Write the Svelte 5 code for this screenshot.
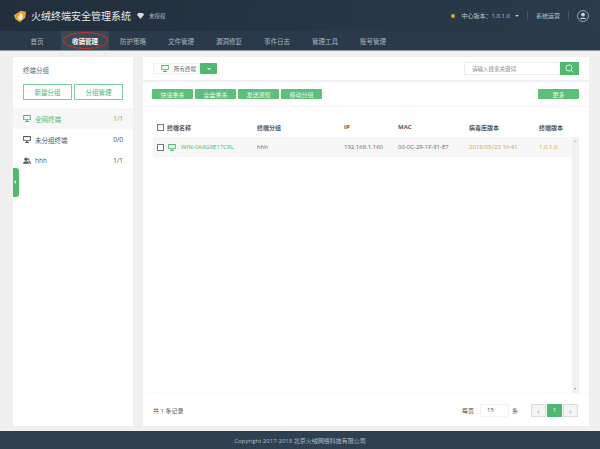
<script>
  const nav = ['首页', '收销管理', '防护策略', '文件管理', '漏洞修复', '事件日志', '管理工具', '账号管理'];
  const actions = ['快速重杀', '全盘重杀', '发送通知', '移动分组'];
  const groups = [
    { name: '全网终端', count: '1/1', icon: 'pc', active: true },
    { name: '未分组终端', count: '0/0', icon: 'pc', active: false },
    { name: 'hhh', count: '1/1', icon: 'users', active: false }
  ];
</script>

<div class="page">
  <header>
    <div class="topbar">
      <div class="brand">
        <svg class="logo" viewBox="0 0 16 16" width="14" height="14">
          <path d="M1 7 L9 2 L15 3 L14 10 L8 15 L3 12 Z" fill="#f0a020" />
          <path d="M9 4 C11 7 12 9 10 12 C8 13 6 12 6 10 C6 8 8 7 9 4 Z" fill="#fff" />
        </svg>
        <span class="title">火绒终端安全管理系统</span>
        <svg class="gem" viewBox="0 0 12 10" width="7" height="6">
          <path d="M2 0 H10 L12 3 L6 10 L0 3 Z" fill="#d5dbe0" />
        </svg>
        <span class="license">未授权</span>
      </div>
      <div class="status">
        <span class="dot"></span>
        <span>中心版本：1.0.1.0</span>
        <span class="caret"></span>
        <span class="sep"></span>
        <span>系统运营</span>
        <span class="sep"></span>
        <svg class="user" viewBox="0 0 16 16" width="12" height="12">
          <circle cx="8" cy="8" r="7.3" fill="none" stroke="#cfd6dc" stroke-width="0.9" />
          <circle cx="8" cy="6" r="2.5" fill="#cfd6dc" />
          <path d="M3.8 12 C4.5 9.6 11.5 9.6 12.2 12 Z" fill="#cfd6dc" />
        </svg>
      </div>
    </div>
    <nav>
      {#each nav as item, i}
        <span class="tab" class:current={i === 1}>
          {item}
          {#if i === 1}<span class="ring"></span>{/if}
        </span>
      {/each}
    </nav>
  </header>

  <div class="content">
    <aside>
      <div class="side-title">终端分组</div>
      <div class="side-buttons">
        <span class="outline">新建分组</span>
        <span class="outline">分组管理</span>
      </div>
      <ul>
        {#each groups as g}
          <li class:active={g.active}>
            {#if g.icon === 'pc'}
              <svg viewBox="0 0 12 11" width="8" height="7">
                <path d="M0 0 H12 V8 H7 V9.5 H9 V11 H3 V9.5 H5 V8 H0 Z M1.5 1.5 V6.5 H10.5 V1.5 Z" fill-rule="evenodd" fill="currentColor" />
              </svg>
            {:else}
              <svg viewBox="0 0 12 10" width="8" height="7">
                <circle cx="4.5" cy="3" r="2.5" fill="currentColor" />
                <path d="M0 10 C0 5 9 5 9 10 Z" fill="currentColor" />
                <path d="M8 1 A2.3 2.3 0 0 1 8 5.4 C10 5.6 12 7 12 10 H10 C10 8 9 7 8 6.4 Z" fill="currentColor" />
              </svg>
            {/if}
            <span class="g-name">{g.name}</span>
            <span class="g-count">{g.count}</span>
          </li>
        {/each}
      </ul>
      <span class="collapse"></span>
    </aside>

    <main>
      <div class="toolbar">
        <div class="all-box">
          <svg viewBox="0 0 12 11" width="8" height="7">
            <path d="M0 0 H12 V8 H7 V9.5 H9 V11 H3 V9.5 H5 V8 H0 Z M1.5 1.5 V6.5 H10.5 V1.5 Z" fill-rule="evenodd" fill="#4fba6f" />
          </svg>
          <span>所有终端</span>
        </div>
        <span class="drop"><i></i></span>
        <div class="search">
          <span class="search-input">请输入搜索关键词</span>
          <span class="search-btn">
            <svg viewBox="0 0 16 16" width="9" height="9">
              <circle cx="7" cy="7" r="5.5" fill="none" stroke="#fff" stroke-width="1.4" />
              <path d="M11 11 L15 15" stroke="#fff" stroke-width="1.4" />
            </svg>
          </span>
        </div>
      </div>

      <div class="panel">
        <div class="actions">
          {#each actions as a}
            <span class="solid">{a}</span>
          {/each}
          <span class="solid more">更多</span>
        </div>
        <div class="table-wrap">
          <div class="row head">
            <span class="c-name"><span class="check"></span>终端名称</span>
            <span class="c-group">终端分组</span>
            <span class="c-ip">IP</span>
            <span class="c-mac">MAC</span>
            <span class="c-virus">病毒库版本</span>
            <span class="c-ver">终端版本</span>
          </div>
          <div class="row body">
            <span class="c-name">
              <span class="check"></span>
              <svg viewBox="0 0 12 11" width="8" height="7">
                <path d="M0 0 H12 V8 H7 V9.5 H9 V11 H3 V9.5 H5 V8 H0 Z M1.5 1.5 V6.5 H10.5 V1.5 Z" fill-rule="evenodd" fill="#4fba6f" />
              </svg>
              <span class="host">WIN-0A8G8E17CRL</span>
            </span>
            <span class="c-group">hhh</span>
            <span class="c-ip">192.168.1.160</span>
            <span class="c-mac">00-0C-29-1F-91-E7</span>
            <span class="c-virus warn">2018/05/23 16:41</span>
            <span class="c-ver warn">1.0.1.0</span>
          </div>
          <div class="scroll"><b class="up"></b><b class="down"></b></div>
        </div>
        <div class="pager">
          <span class="total">共 1 条记录</span>
          <span class="per">每页</span>
          <span class="size">15</span>
          <span class="per">条</span>
          <span class="page-btn">‹</span>
          <span class="page-btn on">1</span>
          <span class="page-btn">›</span>
        </div>
      </div>
    </main>
  </div>

  <footer>Copyright 2017-2018 北京火绒网络科技有限公司</footer>
</div>

<style>
  :global(body) {
    margin: 0;
    background: #f0f0f0;
    font-family: "Open Sans", "Noto Sans CJK SC", sans-serif;
  }

  .page {
    width: 600px;
    height: 449px;
    display: flex;
    flex-direction: column;
    overflow: hidden;
    font-size: 6px;
    color: #555;
  }

  .topbar {
    height: 31px;
    display: flex;
    align-items: center;
    justify-content: space-between;
    padding: 0 11px 0 13px;
    background: linear-gradient(100deg, #212e3c 0%, #273645 60%, #2b3b4b 100%);
  }

  .brand {
    display: flex;
    align-items: center;
  }

  .title {
    margin-left: 4px;
    font-size: 10px;
    color: #e6eaed;
  }

  .gem {
    margin-left: 6px;
  }

  .license {
    margin-left: 5px;
    font-size: 5.5px;
    color: #aeb7bf;
  }

  .status {
    display: flex;
    align-items: center;
    gap: 5px;
    color: #bcc4cb;
    font-size: 6px;
  }

  .dot {
    width: 4px;
    height: 4px;
    margin-right: 2px;
    border-radius: 50%;
    background: #e9a321;
  }

  .caret {
    border: 2px solid transparent;
    border-top-color: #bcc4cb;
    border-bottom: 0;
  }

  .sep {
    width: 1px;
    height: 9px;
    margin: 0 3px;
    background: #465664;
  }

  nav {
    height: 19px;
    display: flex;
    padding-left: 13px;
    background: #2a3a4b;
    border-bottom: 1px solid #8d98a2;
  }

  .tab {
    position: relative;
    width: 48px;
    display: flex;
    align-items: center;
    justify-content: center;
    font-size: 6.5px;
    color: #a9b3bc;
  }

  .tab.current {
    background: #3a4855;
    color: #fff;
    font-weight: 700;
  }

  .ring {
    position: absolute;
    left: 2px;
    top: 1px;
    width: 43px;
    height: 15px;
    border: 1px solid #c8352f;
    border-radius: 50%;
  }

  .content {
    flex: 1;
    display: flex;
    gap: 10px;
    padding: 6px 11px 5px 13px;
    min-height: 0;
  }

  aside {
    position: relative;
    width: 120px;
    flex: none;
    background: #fff;
  }

  .side-title {
    padding: 8px 10px 0;
    height: 21px;
    box-sizing: border-box;
    font-size: 6.5px;
    color: #666;
  }

  .side-buttons {
    display: flex;
    gap: 2px;
    padding: 6px 10px 0;
  }

  .outline {
    flex: 1;
    height: 14px;
    display: flex;
    align-items: center;
    justify-content: center;
    border: 1px solid #7dcf95;
    color: #4fba6f;
    font-size: 6.5px;
  }

  ul {
    list-style: none;
    margin: 8px 0 0;
    padding: 0;
  }

  li {
    height: 21px;
    display: flex;
    align-items: center;
    padding: 0 10px;
    color: #555;
    font-size: 6.5px;
  }

  li.active {
    background: #f7f7f7;
    color: #4fba6f;
  }

  .g-name {
    margin-left: 4px;
  }

  .g-count {
    margin-left: auto;
  }

  .collapse {
    position: absolute;
    left: 0;
    top: 111px;
    width: 6px;
    height: 29px;
    background: #4fba6f;
    border-radius: 0 3px 3px 0;
  }

  .collapse::after {
    content: "";
    position: absolute;
    left: 1px;
    top: 12px;
    border: 2px solid transparent;
    border-right-color: #fff;
    border-left: 0;
  }

  main {
    flex: 1;
    min-width: 0;
    display: flex;
    flex-direction: column;
    gap: 2px;
  }

  .toolbar {
    height: 23px;
    display: flex;
    align-items: center;
    padding: 0 10px;
    background: #fff;
  }

  .all-box {
    width: 47px;
    height: 11px;
    display: flex;
    align-items: center;
    gap: 5px;
    padding-left: 7px;
    box-sizing: border-box;
    color: #666;
    font-size: 5.5px;
    border: 1px solid #f2f2f2;
  }

  .drop {
    width: 17px;
    height: 11px;
    display: flex;
    align-items: center;
    justify-content: center;
    background: #4fba6f;
    border-radius: 1px;
  }

  .drop i {
    border: 2px solid transparent;
    border-top-color: #fff;
    border-bottom: 0;
  }

  .search {
    margin-left: auto;
    display: flex;
    height: 13px;
  }

  .search-input {
    width: 96px;
    display: flex;
    align-items: center;
    padding-left: 7px;
    box-sizing: border-box;
    border: 1px solid #eee;
    border-right: 0;
    font-size: 5.5px;
    color: #888;
  }

  .search-btn {
    width: 19px;
    display: flex;
    align-items: center;
    justify-content: center;
    background: #4fba6f;
  }

  .panel {
    flex: 1;
    min-height: 0;
    display: flex;
    flex-direction: column;
    padding: 0 10px;
    background: #fff;
  }

  .actions {
    height: 24px;
    flex: none;
    display: flex;
    align-items: center;
    gap: 2px;
    border-bottom: 1px solid #f6f6f6;
    margin: 0 -10px;
    padding: 0 10px 0 9px;
  }

  .solid {
    width: 41px;
    height: 10px;
    display: flex;
    align-items: center;
    justify-content: center;
    background: #5cbf7a;
    border-radius: 1px;
    color: #e8f7ec;
    font-size: 6px;
  }

  .more {
    margin-left: auto;
  }

  .table-wrap {
    position: relative;
    flex: 1;
    padding-top: 10px;
  }

  .row {
    height: 20px;
    display: flex;
    align-items: center;
    padding-right: 10px;
    font-size: 6px;
  }

  .head {
    font-weight: 700;
    color: #555;
  }

  .body {
    background: #f7f7f7;
    color: #666;
  }

  .row > span {
    display: flex;
    align-items: center;
  }

  .c-name {
    width: 100px;
    padding-left: 4px;
  }

  .c-group {
    width: 87px;
  }

  .c-ip {
    width: 54px;
  }

  .c-mac {
    width: 71px;
  }

  .c-virus {
    width: 70px;
  }

  .check {
    width: 5px;
    height: 5px;
    margin-right: 3px;
    border: 1px solid #777;
    background: #fff;
  }

  .body .check {
    margin-right: 4px;
  }

  .host {
    margin-left: 5px;
    color: #4fba6f;
  }

  .warn {
    color: #d9a04a;
  }

  .scroll {
    position: absolute;
    right: 0;
    top: 30px;
    bottom: 0;
    width: 7px;
    background: #f1f1f1;
  }

  .up,
  .down {
    position: absolute;
    left: 2px;
    border: 2px solid transparent;
    border-left-width: 1.5px;
    border-right-width: 1.5px;
  }

  .up {
    top: 3px;
    border-bottom-color: #b5b5b5;
    border-top: 0;
  }

  .down {
    bottom: 3px;
    border-top-color: #888;
    border-bottom: 0;
  }

  .pager {
    height: 32px;
    flex: none;
    display: flex;
    align-items: center;
    margin: 0 -10px;
    padding: 0 11px 0 10px;
    border-top: 1px solid #f8f8f8;
  }

  .total {
    margin-right: auto;
    font-size: 6px;
  }

  .size {
    width: 29px;
    height: 13px;
    margin: 0 3px;
    display: flex;
    align-items: center;
    padding-left: 6px;
    box-sizing: border-box;
    border: 1px solid #f4f4f4;
  }

  .per {
    margin-right: 3px;
  }

  .page-btn {
    width: 15px;
    height: 13px;
    margin-left: 1px;
    display: flex;
    align-items: center;
    justify-content: center;
    box-sizing: border-box;
    border: 1px solid #ddd;
    background: #f4f4f4;
    color: #999;
    font-size: 8px;
  }

  .page-btn.on {
    border-color: #4fba6f;
    background: #4fba6f;
    color: #fff;
    font-size: 6px;
  }

  .per + .page-btn {
    margin-left: 10px;
  }

  footer {
    height: 18px;
    flex: none;
    display: flex;
    align-items: center;
    justify-content: center;
    background: #2f4050;
    color: #b5bec6;
    font-size: 6px;
  }
</style>
